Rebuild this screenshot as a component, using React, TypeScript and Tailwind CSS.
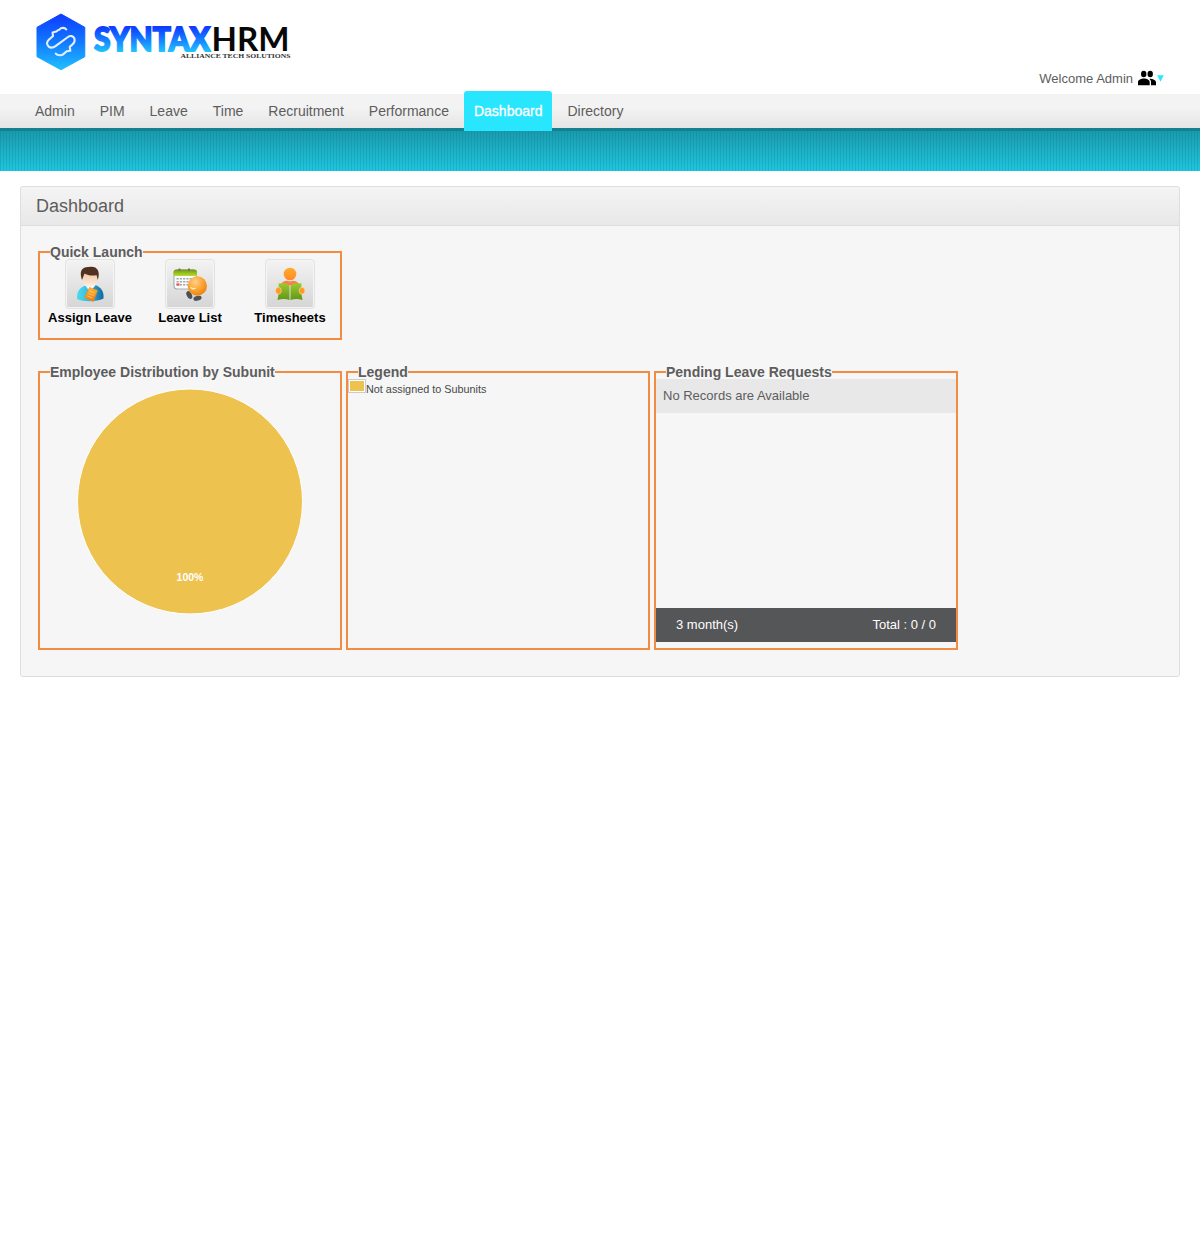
import React from "react";

function Logo() {
  return (
    <svg width="262" height="70" viewBox="32 8 262 70" className="block">
      <defs>
        <linearGradient id="hex" x1="0" y1="0" x2="0" y2="1">
          <stop offset="0" stopColor="#0d3bff" />
          <stop offset="0.5" stopColor="#1278ff" />
          <stop offset="1" stopColor="#1fc0ff" />
        </linearGradient>
        <linearGradient id="word" gradientUnits="userSpaceOnUse" x1="0" y1="27" x2="0" y2="52">
          <stop offset="0" stopColor="#0d3bff" />
          <stop offset="0.45" stopColor="#1478ff" />
          <stop offset="1" stopColor="#20c4ff" />
        </linearGradient>
      </defs>
      <path d="M61 14 84.8 27.3V56.7L61 69.8 37 56.7V27.3Z" fill="url(#hex)" stroke="url(#hex)" strokeWidth="1" strokeLinejoin="round" />
      <path
        d="M66.300 29.500C64.800 27.300 60.800 27.200 59.300 29.800C57.800 29.700 57 31.600 55.300 31.800L52.600 32.600L53 36L48.800 39.700C46.300 42 46.600 44.800 48.700 46.600C51 48.400 53.500 47.600 55.500 46.200L68 37C70.500 35.200 73.200 36 74.300 38.300C75.200 40.500 74 43 72.300 44.600L69.800 46.800L70.300 50.800L66.800 51.200C65 52 64.200 54.600 61 55.200C58.500 55.500 56.700 54.800 55.800 53.600"
        fill="none"
        stroke="#e4efff"
        strokeWidth="2.100"
        strokeLinecap="round"
        strokeLinejoin="round"
      />
      <text x="94" y="50.500" fontFamily="Lato" fontWeight="900" fontSize="32" textLength="116" lengthAdjust="spacingAndGlyphs" fill="url(#word)" stroke="url(#word)" strokeWidth="1.800">SYNTAX</text>
      <text x="211.500" y="51" fontFamily="Lato" fontWeight="700" fontSize="32" textLength="78" lengthAdjust="spacingAndGlyphs" fill="#080808">HRM</text>
      <text x="180.500" y="58.200" fontFamily="'Liberation Serif', serif" fontWeight="700" fontSize="6.600" textLength="110" lengthAdjust="spacingAndGlyphs" fill="#333">ALLIANCE TECH SOLUTIONS</text>
    </svg>
  );
}

function AssignIcon() {
  return (
    <svg width="34" height="40" viewBox="74 264 34 40">
      <defs>
        <linearGradient id="shirt" x1="0" x2="1" y1="0" y2="0">
          <stop offset="0" stopColor="#4bdcf0" />
          <stop offset="0.45" stopColor="#38b9dd" />
          <stop offset="1" stopColor="#14659f" />
        </linearGradient>
        <linearGradient id="card" x1="0" x2="0" y1="0" y2="1">
          <stop offset="0" stopColor="#ffb62c" />
          <stop offset="1" stopColor="#ef7a17" />
        </linearGradient>
        <linearGradient id="face" x1="0" x2="0" y1="0" y2="1">
          <stop offset="0" stopColor="#e9bd98" />
          <stop offset="1" stopColor="#fff0e2" />
        </linearGradient>
      </defs>
      <path d="M78 299C77.500 291 81 287.500 87 285.500L96 285C102 287 105 291 104.500 298.500C98 302 84 302 78 299Z" fill="url(#shirt)" />
      <path d="M86 285 91 292 97 284.500Z" fill="#f6fafd" />
      <ellipse cx="91" cy="278.500" rx="7.600" ry="8.300" fill="url(#face)" />
      <path d="M83 280C79.500 270 84 266.500 90 267C97 265.500 102 270 98.800 280L97.500 275C94 276.500 88 275 85.500 273.500Z" fill="#51301f" />
      <path d="M90.500 287.500 98.500 290.500 94.300 301.500 85.500 297.500Z" fill="url(#card)" stroke="#f08a20" strokeWidth="0.600" />
      <path d="M90.500 291 95.800 293M89.500 293.500 94.800 295.500M88.500 296 93 297.800" stroke="#ffcf7d" strokeWidth="0.800" />
    </svg>
  );
}

function LeaveIcon() {
  return (
    <svg width="38" height="40" viewBox="171 264 38 40">
      <defs>
        <radialGradient id="ball" cx="0.4" cy="0.3" r="0.7">
          <stop offset="0" stopColor="#ffd08a" />
          <stop offset="0.6" stopColor="#fba22f" />
          <stop offset="1" stopColor="#ea8418" />
        </radialGradient>
        <linearGradient id="calTop" x1="0" x2="0" y1="0" y2="1">
          <stop offset="0" stopColor="#709515" />
          <stop offset="1" stopColor="#b4df2c" />
        </linearGradient>
      </defs>
      <rect x="174" y="270" width="22.500" height="19" rx="3" fill="#fbfbfb" stroke="#a9adaf" strokeWidth="1.100" />
      <path d="M173.600 276V272Q173.600 269.500 176.500 269.500H194Q197 269.500 197 272V276Z" fill="url(#calTop)" />
      <path d="M179.500 268.500V271M189 268.500V271" stroke="#6c7063" strokeWidth="1.700" />
      <path d="M176.500 278.800H193M176.500 281.800H193M176.500 284.800H188" stroke="#a3a8aa" strokeWidth="1.500" strokeDasharray="2.200 1.100" />
      <path d="M176.500 284.500H179.500" stroke="#e65c4c" strokeWidth="2.300" />
      <ellipse cx="189.300" cy="295" rx="2.600" ry="4.200" transform="rotate(-25 189.300 295)" fill="#4d5052" />
      <ellipse cx="197.500" cy="298.300" rx="4.200" ry="2.300" transform="rotate(-15 197.500 298.300)" fill="#505355" />
      <circle cx="197.300" cy="286" r="9.700" fill="url(#ball)" />
      <path d="M190.500 287.200Q193 290 195.500 288" fill="none" stroke="#ffebb5" strokeWidth="1.500" />
    </svg>
  );
}

function TimesheetIcon() {
  return (
    <svg width="34" height="40" viewBox="273 264 34 40">
      <defs>
        <linearGradient id="book" x1="0" x2="0" y1="0" y2="1">
          <stop offset="0" stopColor="#9acb2f" />
          <stop offset="1" stopColor="#639518" />
        </linearGradient>
        <linearGradient id="head" x1="0" x2="0" y1="0" y2="1">
          <stop offset="0" stopColor="#ffac2c" />
          <stop offset="1" stopColor="#ff8b27" />
        </linearGradient>
      </defs>
      <circle cx="290" cy="274" r="6.300" fill="url(#head)" />
      <path d="M281 283.800C284 279.800 287 280.300 290 281.500C293 280.300 296 279.800 299 283.800L290 285.500Z" fill="#f5834d" />
      <path d="M278.500 283.500Q285 282.700 289.500 285.500V300Q284 298 277.500 300L279 291ZM301.500 283.500Q295 282.700 290.500 285.500V300Q296 298 302.500 300L301 291Z" fill="url(#book)" />
      <ellipse cx="278.400" cy="290.700" rx="2.900" ry="3.400" fill="#ff9a28" stroke="#ffe6ba" strokeWidth="0.500" />
      <ellipse cx="302" cy="290.700" rx="2.900" ry="3.400" fill="#ff9a28" stroke="#ffe6ba" strokeWidth="0.500" />
    </svg>
  );
}

function Launch({ label, children }: { label: string; children: React.ReactNode }) {
  return (
    <div className="flex w-[100px] flex-col items-center">
      <div className="flex h-[50px] w-[50px] items-center justify-center rounded-[4px] border border-[#e2e3dd] bg-linear-to-b from-[#f3f3f3] to-[#d5d5d5] shadow-[inset_0_0_0_1px_#f5f5f5]">
        {children}
      </div>
      <span className="mt-px text-[13px] leading-[16px] font-bold whitespace-nowrap text-black">{label}</span>
    </div>
  );
}

function Box({ title, className, children }: { title: string; className: string; children: React.ReactNode }) {
  return (
    <fieldset className={"m-0 w-[304px] min-w-0 border-2 border-[#f28c43] p-0 " + className}>
      <legend className="relative z-10 ml-[10px] h-4 p-0 text-[14px] leading-[16px] font-bold whitespace-nowrap text-[#5d5d5d]">{title}</legend>
      {children}
    </fieldset>
  );
}

const menu = ["Admin", "PIM", "Leave", "Time", "Recruitment", "Performance", "Dashboard", "Directory"];

export default function App() {
  return (
    <div className="min-h-[1250px] bg-white font-['Liberation_Sans',Arial,sans-serif] text-[#5d5d5d]">
      <header className="flex h-[94px] items-start justify-between pt-2 pr-[36px] pl-8">
        <Logo />
        <div className="mt-[63px] flex h-4 items-center text-[13px] leading-[16px]">
          <span>Welcome Admin</span>
          <svg width="20" height="16" viewBox="0 0 20 16" className="-mt-[2px] ml-1">
            <g fill="#000">
              <ellipse cx="6.700" cy="4" rx="2.700" ry="3.200" />
              <ellipse cx="13.200" cy="4" rx="2.700" ry="3.200" />
              <path d="M1 15.200V12.300C1 9.800 4.300 8.600 7 8.600S12.700 9.800 12.700 12.300V15.200ZM14 15.200V12C14 10.600 13.300 9.500 12.300 8.700C15.500 8.600 19 9.900 19 12.300V15.200Z" />
            </g>
          </svg>
          <svg width="7" height="7" viewBox="0 0 7 7" className="-mt-[2px]">
            <path d="M0.200 0.300H6.800L3.500 6.800Z" fill="#29e8ff" />
          </svg>
        </div>
      </header>

      <nav className="flex h-[37px] items-end gap-[5px] border-b-[3px] border-[#14818f] bg-linear-to-b from-[#f3f3f3] from-40% to-[#e5e5e5] pl-[25px]">
        {menu.map((m) => (
          <a
            key={m}
            className={
              m === "Dashboard"
                ? "z-10 -mb-[3px] h-10 rounded-t-[3px] bg-[#29e6ff] px-[10px] text-[14px] leading-[40px] text-white [-webkit-text-stroke:0.3px_white]"
                : "h-[34px] px-[10px] text-[14px] leading-[34px]"
            }
          >
            {m}
          </a>
        ))}
      </nav>
      <div className="h-10 bg-[repeating-linear-gradient(90deg,rgba(0,60,80,0.12)_0_1px,transparent_1px_3px),linear-gradient(to_bottom,#1a9bae,#1fc6df)]" />

      <main className="mx-5 mt-[15px] h-[491px] rounded-[3px] border border-[#dedede] bg-[#f6f6f6]">
        <h1 className="h-[39px] rounded-t-[3px] border-b border-[#dedede] bg-linear-to-b from-[#f4f4f4] to-[#e8e8e8] pl-[15px] text-[18px] leading-[38px]">Dashboard</h1>
        <div className="flex flex-col gap-6 pt-[18px] pl-[17px]">
          <Box title="Quick Launch" className="h-[96px]">
            <div className="-mt-px flex">
              <Launch label="Assign Leave"><AssignIcon /></Launch>
              <Launch label="Leave List"><LeaveIcon /></Launch>
              <Launch label="Timesheets"><TimesheetIcon /></Launch>
            </div>
          </Box>
          <div className="flex gap-1">
            <Box title="Employee Distribution by Subunit" className="h-[286px]">
              <svg width="300" height="260" viewBox="0 0 300 260" className="block">
                <circle cx="150" cy="121.500" r="112.500" fill="#edc24f" stroke="#fff" strokeWidth="1" />
                <text x="150" y="201" textAnchor="middle" fontFamily="'Liberation Sans', Arial, sans-serif" fontWeight="700" fontSize="10.500" fill="#fff">100%</text>
              </svg>
            </Box>
            <Box title="Legend" className="h-[286px]">
              <div className="-mt-px flex">
                <div className="h-[14px] w-[18px] border border-[#ccc] bg-white p-px">
                  <div className="h-full bg-[#edc24f]" />
                </div>
                <span className="mt-[4px] text-[10.840px] leading-[13px] text-[#484848]">Not assigned to Subunits</span>
              </div>
            </Box>
            <Box title="Pending Leave Requests" className="h-[286px]">
              <div className="-mt-px flex h-[263px] flex-col justify-between text-[13px]">
                <div className="h-[34px] bg-[#e8e8e8] pl-[7px] leading-[34px]">No Records are Available</div>
                <div className="flex h-[34px] justify-between bg-[#555658] px-5 leading-[34px] text-white">
                  <span>3 month(s)</span>
                  <span>Total : 0 / 0</span>
                </div>
              </div>
            </Box>
          </div>
        </div>
      </main>
    </div>
  );
}
